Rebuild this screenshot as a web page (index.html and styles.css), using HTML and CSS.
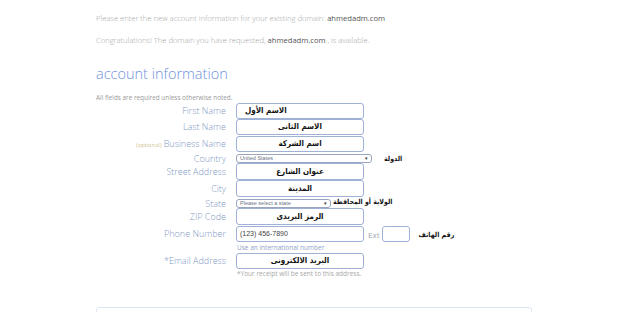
FILE: index.html
```html
<!DOCTYPE html>
<html lang="en">
<head>
  <meta charset="UTF-8">
  <title>account information</title>
  <link rel="stylesheet" href="styles.css">
</head>
<body>

<div class="page">
  <p class="intro">Please enter the new account information for your existing domain: <b>ahmedadm.com</b></p>
  <p class="intro second">Congratulations! The domain you have requested, <b>ahmedadm.com</b> , is available.</p>

  <h2 class="title">account information</h2>
  <p class="required">All fields are required unless otherwise noted.</p>

  <div class="form">
    <div class="row mb0">
      <label class="lbl">First Name</label>
      <div class="input left">الاسم الأول</div>
    </div>
    <div class="row mb1">
      <label class="lbl">Last Name</label>
      <div class="input">الاسم الثانى</div>
    </div>
    <div class="row mb2">
      <label class="lbl"><span class="opt">(optional)</span> Business Name</label>
      <div class="input">اسم الشركة</div>
    </div>
    <div class="row sel-row mb0">
      <label class="lbl">Country</label>
      <div class="select country">United States<span class="caret">▾</span></div>
      <span class="note note-country">الدولة</span>
    </div>
    <div class="row mb0">
      <label class="lbl">Street Address</label>
      <div class="input tall">عنوان الشارع</div>
    </div>
    <div class="row mb2">
      <label class="lbl">City</label>
      <div class="input tall">المدينة</div>
    </div>
    <div class="row sel-row mb0">
      <label class="lbl">State</label>
      <div class="select state">Please select a state<span class="caret">▾</span></div>
      <span class="note note-state">الولاية أو المحافظة</span>
    </div>
    <div class="row mb1">
      <label class="lbl">ZIP Code</label>
      <div class="input tall">الرمز البريدى</div>
    </div>
    <div class="row mb0">
      <label class="lbl">Phone Number</label>
      <div class="input phone">(123) 456-7890</div>
      <span class="ext-lbl">Ext</span>
      <div class="input ext"></div>
      <span class="note note-phone">رقم الهاتف</span>
    </div>
    <div class="help">Use an international number</div>
    <div class="row mb0">
      <label class="lbl">*Email Address</label>
      <div class="input">البريد الالكترونى</div>
    </div>
    <div class="help small">*Your receipt will be sent to this address.</div>
  </div>

  <div class="next-box"></div>
</div>

</body>
</html>
```

FILE: styles.css
```css
/* 기본 */
body {
  margin: 0;
  background: #fff;
  font-family: "Open Sans", "Liberation Sans", sans-serif;
  color: #999;
}
.page {
  padding: 0 0 0 96px;
  position: relative;
  height: 312px;
  overflow: hidden;
}

/* 상단 안내 */
.intro {
  margin: 0;
  padding-top: 13px;
  font-size: 7.6px;
  line-height: 10px;
  color: #a5a5a5;
  font-weight: 300;
}
.intro b {
  font-weight: 400;
  color: #555;
}
.intro.second {
  padding-top: 12px;
}

.title {
  margin: 19px 0 0;
  font-size: 14.5px;
  line-height: 20px;
  font-weight: 300;
  color: #6f92dc;
}
.required {
  margin: 10px 0 0;
  font-size: 6.4px;
  line-height: 8px;
  color: #9a9a9a;
}

/* 폼 */
.form {
  margin-top: 1px;
}
.row {
  display: flex;
  align-items: center;
}
.mb0 { margin-bottom: 0; }
.mb1 { margin-bottom: 1px; }
.mb2 { margin-bottom: 2px; }

.lbl {
  width: 130px;
  margin-right: 10px;
  text-align: right;
  font-size: 9px;
  line-height: 12px;
  color: #8299c4;
  font-weight: 300;
}
.lbl .opt {
  font-size: 6px;
  color: #b8a24a;
}

.input {
  box-sizing: border-box;
  width: 128px;
  height: 16px;
  border: 1px solid #9fb1d6;
  border-radius: 3px;
  font-family: "DejaVu Sans Condensed", "DejaVu Sans", sans-serif;
  font-stretch: condensed;
  font-weight: bold;
  font-size: 8px;
  line-height: 14px;
  color: #111;
  text-align: center;
}
.input.left {
  text-align: left;
  padding-left: 8px;
}
.input.tall {
  height: 17px;
  line-height: 15px;
}

.select {
  box-sizing: border-box;
  height: 9px;
  border: 1px solid #9aa6bd;
  border-radius: 3px;
  font-family: "Liberation Sans", sans-serif;
  font-size: 5.5px;
  line-height: 7px;
  padding-left: 3px;
  color: #6a7488;
  position: relative;
}
.select .caret {
  position: absolute;
  right: 3px;
  top: 0;
  font-size: 5px;
  color: #333;
}
.select.country { width: 136px; }
.select.state { width: 95px; }
.sel-row { height: 9px; }
.sel-row .lbl { line-height: 9px; }

.note {
  font-family: "DejaVu Sans Condensed", "DejaVu Sans", sans-serif;
  font-stretch: condensed;
  font-weight: bold;
  font-size: 7px;
  color: #111;
  white-space: nowrap;
}
.note-country { margin-left: 12px; margin-top: 1px; }
.note-state { margin-left: 2px; margin-top: -3px; }
.note-phone { margin-left: 8px; margin-top: 2px; }

.input.phone {
  text-align: left;
  padding-left: 3px;
  font-family: "Liberation Sans", sans-serif;
  font-stretch: normal;
  font-weight: normal;
  font-size: 7px;
  color: #444;
}
.ext-lbl {
  margin-left: 4px;
  margin-right: 3px;
  font-size: 8px;
  color: #a0a8b8;
}
.input.ext { width: 28px; }

.help {
  padding-left: 141px;
  font-size: 6.5px;
  line-height: 9px;
  margin: 1px 0 1px;
  color: #8fa3c8;
}
.help.small {
  color: #a8a8a8;
  margin: 0;
}

/* 하단 박스 */
.next-box {
  position: absolute;
  left: 96px;
  top: 307px;
  width: 434px;
  height: 20px;
  border: 1px solid #dde6f4;
  border-radius: 3px;
}
```
